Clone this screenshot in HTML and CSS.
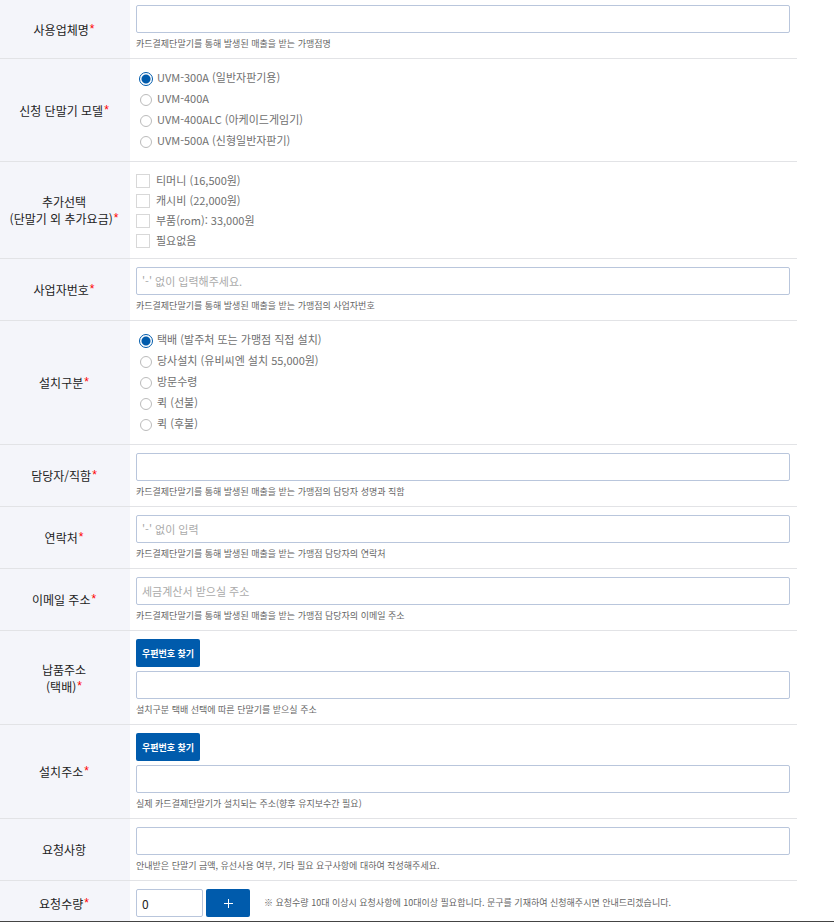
FILE: index.html
```html
<!DOCTYPE html>
<html lang="ko">
<head>
<meta charset="utf-8">
<meta name="viewport" content="width=device-width, initial-scale=1">
<title>단말기 신청</title>
<link rel="stylesheet" href="styles.css">
</head>
<body>
<form class="form">
  <div class="row row-first">
    <div class="head"><label for="company">사용업체명<span class="req">*</span></label></div>
    <div class="cell">
      <input class="text" type="text" id="company">
      <p class="help">카드결제단말기를 통해 발생된 매출을 받는 가맹점명</p>
    </div>
  </div>
  <div class="row" role="radiogroup" aria-labelledby="h-model">
    <div class="head"><span id="h-model">신청 단말기 모델<span class="req">*</span></span></div>
    <div class="cell radios">
      <label class="option"><input type="radio" name="model" checked>UVM-300A (일반자판기용)</label>
      <label class="option"><input type="radio" name="model">UVM-400A</label>
      <label class="option"><input type="radio" name="model">UVM-400ALC (아케이드게임기)</label>
      <label class="option"><input type="radio" name="model">UVM-500A (신형일반자판기)</label>
    </div>
  </div>
  <div class="row" role="group" aria-labelledby="h-extra">
    <div class="head"><span id="h-extra">추가선택<br>(단말기 외 추가요금)<span class="req">*</span></span></div>
    <div class="cell checks">
      <label class="option"><input type="checkbox">티머니 (16,500원)</label>
      <label class="option"><input type="checkbox">캐시비 (22,000원)</label>
      <label class="option"><input type="checkbox">부품(rom): 33,000원</label>
      <label class="option"><input type="checkbox">필요없음</label>
    </div>
  </div>
  <div class="row">
    <div class="head"><label for="bizno">사업자번호<span class="req">*</span></label></div>
    <div class="cell">
      <input class="text" type="text" id="bizno" placeholder="'-' 없이 입력해주세요.">
      <p class="help">카드결제단말기를 통해 발생된 매출을 받는 가맹점의 사업자번호</p>
    </div>
  </div>
  <div class="row" role="radiogroup" aria-labelledby="h-install">
    <div class="head"><span id="h-install">설치구분<span class="req">*</span></span></div>
    <div class="cell radios">
      <label class="option"><input type="radio" name="install" checked>택배 (발주처 또는 가맹점 직접 설치)</label>
      <label class="option"><input type="radio" name="install">당사설치 (유비씨엔 설치 55,000원)</label>
      <label class="option"><input type="radio" name="install">방문수령</label>
      <label class="option"><input type="radio" name="install">퀵 (선불)</label>
      <label class="option"><input type="radio" name="install">퀵 (후불)</label>
    </div>
  </div>
  <div class="row">
    <div class="head"><label for="manager">담당자/직함<span class="req">*</span></label></div>
    <div class="cell">
      <input class="text" type="text" id="manager">
      <p class="help">카드결제단말기를 통해 발생된 매출을 받는 가맹점의 담당자 성명과 직함</p>
    </div>
  </div>
  <div class="row">
    <div class="head"><label for="phone">연락처<span class="req">*</span></label></div>
    <div class="cell">
      <input class="text" type="tel" id="phone" placeholder="'-' 없이 입력">
      <p class="help">카드결제단말기를 통해 발생된 매출을 받는 가맹점 담당자의 연락처</p>
    </div>
  </div>
  <div class="row">
    <div class="head"><label for="email">이메일 주소<span class="req">*</span></label></div>
    <div class="cell">
      <input class="text" type="text" id="email" placeholder="세금계산서 받으실 주소">
      <p class="help">카드결제단말기를 통해 발생된 매출을 받는 가맹점 담당자의 이메일 주소</p>
    </div>
  </div>
  <div class="row">
    <div class="head"><label for="delivery">납품주소<br>(택배)<span class="req">*</span></label></div>
    <div class="cell">
      <button class="btn find" type="button">우편번호 찾기</button>
      <input class="text" type="text" id="delivery">
      <p class="help">설치구분 택배 선택에 따른 단말기를 받으실 주소</p>
    </div>
  </div>
  <div class="row">
    <div class="head"><label for="place">설치주소<span class="req">*</span></label></div>
    <div class="cell">
      <button class="btn find" type="button">우편번호 찾기</button>
      <input class="text" type="text" id="place">
      <p class="help">실제 카드결제단말기가 설치되는 주소(향후 유지보수간 필요)</p>
    </div>
  </div>
  <div class="row">
    <div class="head"><label for="request">요청사항</label></div>
    <div class="cell">
      <input class="text" type="text" id="request">
      <p class="help">안내받은 단말기 금액, 유선사용 여부, 기타 필요 요구사항에 대하여 작성해주세요.</p>
    </div>
  </div>
  <div class="row row-last">
    <div class="head"><label for="qty">요청수량<span class="req">*</span></label></div>
    <div class="cell quantity">
      <input class="text qty" type="text" id="qty" value="0">
      <button class="btn plus" type="button" aria-label="수량 추가"><svg width="10" height="10" viewBox="0 0 10 10" aria-hidden="true"><path d="M5.5 1v9M1 5.5h9" stroke="#fff" fill="none"/></svg></button>
      <p class="note">※ 요청수량 10대 이상시 요청사항에 10대이상 필요합니다. 문구를 기재하여 신청해주시면 안내드리겠습니다.</p>
    </div>
  </div>
</form>
</body>
</html>
```
FILE: styles.css
```css
* {
  box-sizing: border-box;
}

body {
  margin: 0;
  background: #fff;
  color: #222;
  font-family: "Noto Sans CJK KR", "Noto Sans", sans-serif;
  font-size: 12px;
  line-height: 17px;
  border-bottom: 1px solid #444;
}

input,
button {
  margin: 0;
  font-family: inherit;
}

.form {
  margin-right: 37px;
}

.row {
  display: grid;
  grid-template-columns: 130px 1fr;
  border-bottom: 1px solid #e2e3e6;
}

.row-last {
  border-bottom: 0;
}

.head {
  display: flex;
  align-items: center;
  justify-content: center;
  padding-right: 2px;
  background: #f4f5fa;
  text-align: center;
}

.row-last .head {
  padding-top: 4px;
}

.req {
  margin-left: 1px;
  color: #f00;
  font-family: "Liberation Sans", sans-serif;
  font-size: 12px;
  line-height: 1;
  vertical-align: 2px;
}

.cell {
  display: flex;
  flex-direction: column;
  min-width: 0;
  padding: 8px 7px 7px 6px;
}

.row-first .cell {
  padding-top: 5px;
}

.text {
  width: 100%;
  height: 28px;
  padding: 0 5px;
  border: 1px solid #b9c6dc;
  border-radius: 2px;
  background: #fff;
  color: #222;
  font-size: 11px;
}

.text::placeholder {
  color: #aaa;
}

.help {
  margin: 4px 0 0;
  color: #666;
  font-size: 9px;
  line-height: 14px;
}

.option {
  display: flex;
  align-items: center;
  align-self: flex-start;
  color: #707070;
  font-size: 11px;
}

.option input {
  appearance: none;
  flex: none;
  background: #fff;
}

.radios {
  padding: 8px 9px 10px;
}

.radios .option {
  height: 21px;
}

.radios input {
  width: 12px;
  height: 12px;
  margin: 2px 5px 0 1px;
  border: 1px solid #bbb;
  border-radius: 50%;
}

.radios input:checked {
  width: 14px;
  height: 14px;
  margin: 2px 4px 0 0;
  border: 1px solid #005bac;
  background: radial-gradient(circle, #005bac 4px, #fff 5px);
}

.checks {
  padding-bottom: 8px;
}

.checks .option {
  height: 20px;
}

.checks input {
  width: 14px;
  height: 14px;
  margin: 2px 6px 0 0;
  border: 1px solid #d8d8d8;
}

.btn {
  height: 28px;
  padding: 0;
  border: 0;
  border-radius: 2px;
  background: #005bac;
  color: #fff;
}

.find {
  width: 64px;
  margin-bottom: 4px;
  font-size: 9px;
  font-weight: 700;
}

.quantity {
  flex-direction: row;
  align-items: center;
  padding-bottom: 4px;
}

.qty {
  flex: none;
  width: 67px;
  margin-right: 3px;
  font-size: 12px;
}

.plus {
  display: grid;
  place-items: center;
  flex: none;
  width: 44px;
}

.note {
  margin: 0 0 0 14px;
  color: #666;
  font-size: 9px;
  line-height: 14px;
}
```
